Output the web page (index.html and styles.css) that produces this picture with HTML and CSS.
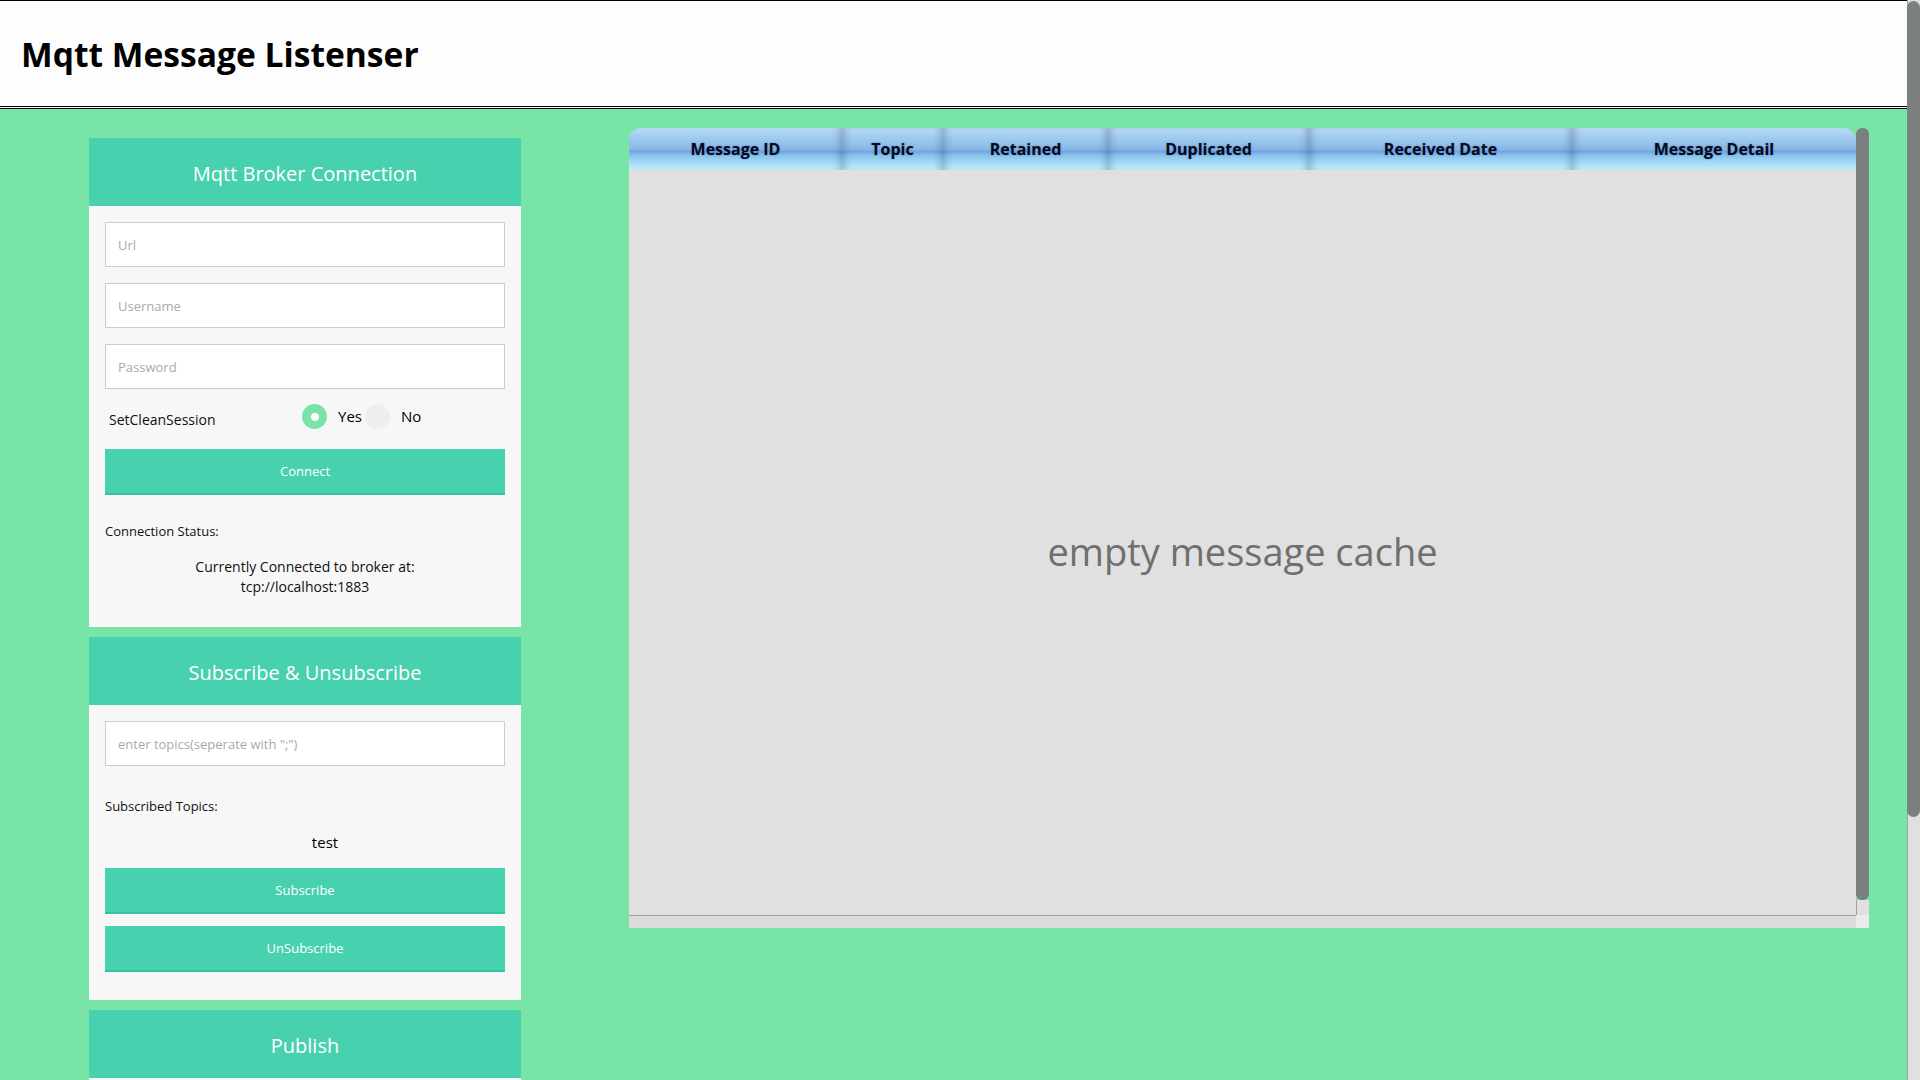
FILE: index.html
```html
<!DOCTYPE html>
<html lang="en">
<head>
<meta charset="utf-8">
<title>Mqtt Message Listenser</title>
<link rel="stylesheet" href="styles.css">
</head>
<body>
<div class="window">
  <div class="page">
    <header class="topbar">
      <h1 class="app-title">Mqtt Message Listenser</h1>
    </header>
    <main class="main">
      <aside class="sidebar">
        <section class="panel">
          <h2 class="panel-title">Mqtt Broker Connection</h2>
          <div class="panel-body">
            <input class="field" type="text" placeholder="Url">
            <input class="field" type="text" placeholder="Username">
            <input class="field" type="password" placeholder="Password">
            <div class="option-row">
              <span class="option-label">SetCleanSession</span>
              <span class="radio"><span class="radio-dot checked"></span><span class="radio-text">Yes</span></span>
              <span class="radio"><span class="radio-dot"></span><span class="radio-text">No</span></span>
            </div>
            <button class="btn btn-connect" type="button">Connect</button>
            <p class="status-label">Connection Status:</p>
            <p class="status-text">Currently Connected to broker at:<br>tcp://localhost:1883</p>
          </div>
        </section>

        <section class="panel">
          <h2 class="panel-title">Subscribe &amp; Unsubscribe</h2>
          <div class="panel-body panel-body-sub">
            <input class="field" type="text" placeholder="enter topics(seperate with &quot;;&quot;)">
            <p class="status-label topics-label">Subscribed Topics:</p>
            <ul class="topic-list">
              <li>test</li>
            </ul>
            <button class="btn btn-sub" type="button">Subscribe</button>
            <button class="btn btn-unsub" type="button">UnSubscribe</button>
          </div>
        </section>

        <section class="panel">
          <h2 class="panel-title">Publish</h2>
          <div class="panel-body panel-body-pub"></div>
        </section>
      </aside>

      <section class="messages">
        <div class="grid-main">
          <div class="grid-head">
            <div class="col">Message ID</div>
            <div class="col">Topic</div>
            <div class="col">Retained</div>
            <div class="col">Duplicated</div>
            <div class="col">Received Date</div>
            <div class="col">Message Detail</div>
          </div>
          <div class="grid-body">
            <span class="empty-text">empty message cache</span>
          </div>
          <div class="hscroll"></div>
        </div>
        <div class="vscroll">
          <div class="vscroll-thumb"></div>
          <div class="vscroll-track"></div>
          <div class="vscroll-corner"></div>
        </div>
      </section>
    </main>
  </div>
  <div class="page-scroll">
    <div class="page-scroll-thumb"></div>
    <div class="page-scroll-track"></div>
  </div>
</div>
</body>
</html>
```

FILE: styles.css
```css
* {
  box-sizing: border-box;
}

html,
body {
  margin: 0;
  height: 100%;
  overflow: hidden;
}

body {
  font-family: "Open Sans", "Noto Sans", sans-serif;
  color: #000;
  background: #78e4a5;
}

.window {
  display: flex;
  height: 1080px;
}

.page {
  flex: 1;
  min-width: 0;
  display: flex;
  flex-direction: column;
  background: #78e4a5;
  overflow: hidden;
}

/* ---------- top bar ---------- */
.topbar {
  height: 109px;
  flex: none;
  background: #fdfdfd;
  border-top: 1px solid #000;
  border-bottom: 3px double #000;
  padding: 33px 21px 0;
}

.app-title {
  margin: 0;
  font-size: 33.6px;
  line-height: 40px;
  font-weight: 700;
  color: #000;
}

/* ---------- layout ---------- */
.main {
  display: flex;
  align-items: flex-start;
}

.sidebar {
  width: 432px;
  flex: none;
  margin: 29px 0 0 89px;
  display: flex;
  flex-direction: column;
  gap: 10px;
}

/* ---------- panels ---------- */
.panel {
  background: #f7f7f7;
}

.panel-title {
  margin: 0;
  height: 68px;
  line-height: 68px;
  padding-top: 2px;
  background: #47d1ae;
  color: #fff;
  font-size: 20px;
  font-weight: 400;
  text-align: center;
}

.panel-body {
  display: flex;
  flex-direction: column;
  padding: 16px 16px 30px;
}

.panel-body-sub {
  padding-bottom: 28px;
}

.panel-body-pub {
  height: 200px;
}

.field {
  height: 45px;
  width: 100%;
  margin: 0 0 16px;
  border: 1px solid #cccccc;
  background: #fff;
  padding: 0 12px;
  font-family: "Open Sans", "Noto Sans", sans-serif;
  font-size: 13px;
  color: #333;
  outline: none;
}

.field::placeholder {
  color: #a9a9a9;
}

.option-row {
  display: flex;
  align-items: center;
  height: 25px;
  margin-top: -1px;
}

.option-label {
  width: 197px;
  padding: 6px 0 0 4px;
  font-size: 14px;
  color: #111;
}

.radio {
  display: flex;
  align-items: center;
}

.radio-dot {
  width: 25px;
  height: 25px;
  border-radius: 50%;
  background: #eeeeee;
  flex: none;
  display: flex;
  align-items: center;
  justify-content: center;
}

.radio-dot.checked {
  background: #78e4a5;
}

.radio-dot.checked::after {
  content: "";
  width: 8px;
  height: 8px;
  border-radius: 50%;
  background: #fff;
}

.radio-text {
  font-size: 15px;
  margin: 0 3px 1px 11px;
  color: #000;
}

.btn {
  width: 100%;
  height: 46px;
  border: none;
  border-bottom: 2px solid #37c39f;
  background: #47d1ae;
  color: #fff;
  font-family: "Open Sans", "Noto Sans", sans-serif;
  font-size: 13px;
  padding: 0;
  cursor: pointer;
}

.btn-connect {
  margin-top: 20px;
}

.btn-sub {
  margin-top: 16px;
}

.btn-unsub {
  margin-top: 12px;
}

.status-label {
  margin: 27px 0 0;
  font-size: 13px;
  line-height: 18px;
  color: #111;
}

.topics-label {
  margin-top: 15px;
}

.status-text {
  margin: 17px 0 0;
  font-size: 14px;
  line-height: 20px;
  text-align: center;
  color: #111;
}

.topic-list {
  list-style: none;
  margin: 17px 0 0;
  padding: 0 0 0 40px;
  text-align: center;
  font-size: 15px;
  line-height: 20px;
}

/* ---------- message grid ---------- */
.messages {
  display: flex;
  width: 1240px;
  flex: none;
  margin: 19px 0 0 108px;
}

.grid-main {
  width: 1227px;
  display: flex;
  flex-direction: column;
}

.grid-head {
  display: grid;
  grid-template-columns: 213px 101px 165px 201px 263px 1fr;
  height: 42px;
  border-radius: 12px 12px 0 0;
  overflow: hidden;
  background: linear-gradient(to bottom,
      #b8dcf6 0%,
      #a3cdf0 20%,
      #8fbbe8 45%,
      #86b5e6 52%,
      #6ea4e1 56%,
      #86bfec 64%,
      #a2d8f3 80%,
      #bff0fb 100%);
}

.col {
  display: flex;
  align-items: center;
  justify-content: center;
  font-size: 16px;
  font-weight: 700;
  color: #050a18;
  text-shadow: 0 0 2px rgba(40, 80, 170, 0.55);
  box-shadow: inset 8px 0 8px -6px rgba(20, 40, 80, 0.28),
    inset -8px 0 8px -6px rgba(20, 40, 80, 0.28);
}

.col:first-child {
  box-shadow: inset -8px 0 8px -6px rgba(20, 40, 80, 0.28);
}

.col:last-child {
  box-shadow: inset 8px 0 8px -6px rgba(20, 40, 80, 0.28);
}

.grid-body {
  height: 745px;
  background: #e0e0e0;
  display: flex;
  align-items: center;
  justify-content: center;
  padding-top: 16px;
}

.empty-text {
  font-size: 38px;
  color: #6f6f6f;
}

.hscroll {
  height: 13px;
  border-top: 1px solid #a0a0a0;
  background: #dcdcdc;
}

.vscroll {
  width: 13px;
  display: flex;
  flex-direction: column;
}

.vscroll-thumb {
  height: 772px;
  background: #7b7f7f;
  border-radius: 6px;
}

.vscroll-track {
  flex: 1;
  background: #e0e0e0;
  border-left: 1px solid #a0a0a0;
}

.vscroll-corner {
  height: 13px;
  background: #ebebeb;
}

/* ---------- page scrollbar ---------- */
.page-scroll {
  width: 13px;
  flex: none;
  display: flex;
  flex-direction: column;
  background: #e0e0e0;
  border-left: 1px solid #a0a0a0;
}

.page-scroll-thumb {
  height: 816px;
  margin-top: 1px;
  margin-left: -1px;
  background: #7b7f7f;
  border-radius: 7px;
}

.page-scroll-track {
  flex: 1;
}
```
